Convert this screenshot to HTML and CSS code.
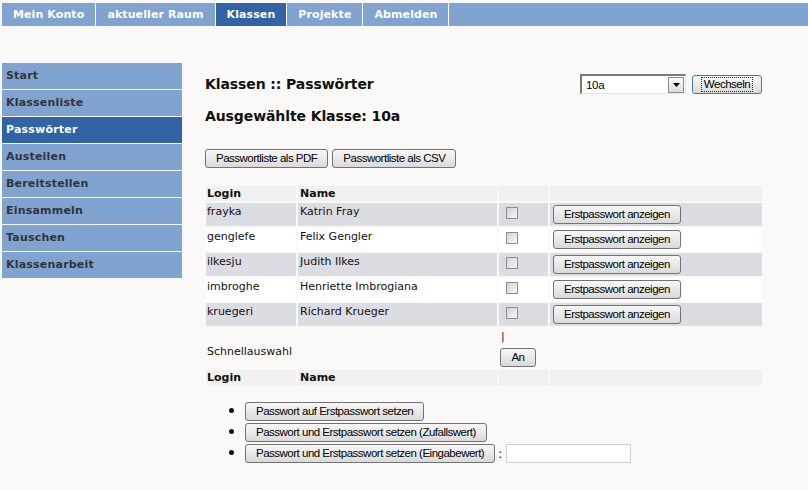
FILE: index.html
```html
<!DOCTYPE html>
<html lang="de">
<head>
<meta charset="utf-8">
<title>Klassen :: Passwörter</title>
<link rel="stylesheet" href="styles.css">
</head>
<body>
<nav class="topnav">
  <a class="tab">Mein Konto</a>
  <a class="tab">aktueller Raum</a>
  <a class="tab tab-active">Klassen</a>
  <a class="tab">Projekte</a>
  <a class="tab">Abmelden</a>
  <span class="tab-fill"></span>
</nav>
<div class="layout">
  <aside class="sidenav">
    <a class="side-item">Start</a>
    <a class="side-item">Klassenliste</a>
    <a class="side-item side-active">Passwörter</a>
    <a class="side-item">Austeilen</a>
    <a class="side-item">Bereitstellen</a>
    <a class="side-item">Einsammeln</a>
    <a class="side-item">Tauschen</a>
    <a class="side-item">Klassenarbeit</a>
  </aside>
  <main class="content">
    <div class="head-row">
      <h1 class="title">Klassen :: Passwörter</h1>
      <div class="class-select">
        <div class="select">
          <span class="select-value">10a</span>
          <span class="select-arrow"><svg width="7" height="4" viewBox="0 0 7 4"><path d="M0 0H7L3.5 4Z" fill="#000"/></svg></span>
        </div>
        <button class="btn btn-focus"><span class="focus-ring">Wechseln</span></button>
      </div>
    </div>
    <h2 class="subtitle">Ausgewählte Klasse: 10a</h2>
    <div class="export">
      <button class="btn">Passwortliste als PDF</button>
      <button class="btn">Passwortliste als CSV</button>
    </div>
    <table class="students">
      <colgroup>
        <col class="col-login"><col class="col-name"><col class="col-check"><col class="col-btn">
      </colgroup>
      <tr class="head">
        <th>Login</th><th class="name">Name</th><th></th><th></th>
      </tr>
      <tr class="odd">
        <td>frayka</td><td class="name">Katrin Fray</td><td><span class="check"></span></td><td><button class="btn btn-row">Erstpasswort anzeigen</button></td>
      </tr>
      <tr class="even">
        <td>genglefe</td><td class="name">Felix Gengler</td><td><span class="check"></span></td><td><button class="btn btn-row">Erstpasswort anzeigen</button></td>
      </tr>
      <tr class="odd">
        <td>ilkesju</td><td class="name">Judith Ilkes</td><td><span class="check"></span></td><td><button class="btn btn-row">Erstpasswort anzeigen</button></td>
      </tr>
      <tr class="even">
        <td>imbroghe</td><td class="name">Henriette Imbrogiana</td><td><span class="check"></span></td><td><button class="btn btn-row">Erstpasswort anzeigen</button></td>
      </tr>
      <tr class="odd">
        <td>kruegeri</td><td class="name">Richard Krueger</td><td><span class="check"></span></td><td><button class="btn btn-row">Erstpasswort anzeigen</button></td>
      </tr>
      <tr class="quick">
        <td colspan="2" class="quick-label">Schnellauswahl</td>
        <td class="quick-cell"><div class="pipe">|</div><button class="btn btn-an">An</button></td>
        <td></td>
      </tr>
      <tr class="head">
        <th>Login</th><th class="name">Name</th><th></th><th></th>
      </tr>
    </table>
    <ul class="actions">
      <li><button class="btn">Passwort auf Erstpasswort setzen</button></li>
      <li><button class="btn">Passwort und Erstpasswort setzen (Zufallswert)</button></li>
      <li><button class="btn">Passwort und Erstpasswort setzen (Eingabewert)</button><span class="colon">:</span><span class="text-input"></span></li>
    </ul>
  </main>
</div>
</body>
</html>
```
FILE: styles.css
```css
html, body {
  margin: 0;
  padding: 0;
}
body {
  background: #faf9f7;
  font-family: "DejaVu Sans", Verdana, sans-serif;
  font-size: 11px;
  color: #111;
}

/* top navigation */
.topnav {
  display: flex;
  margin: 3px 0 0 2px;
  height: 23px;
}
.tab {
  display: block;
  padding: 0 11px;
  line-height: 23px;
  background: #80a3d0;
  color: #fff;
  font-weight: bold;
  letter-spacing: 0.1px;
  border-right: 1px solid #fff;
  white-space: nowrap;
}
.tab-active {
  background: #3263a4;
}
.tab-fill {
  flex: 1;
  background: #80a3d0;
}

.layout {
  display: flex;
  margin-top: 37px;
}

/* side navigation */
.sidenav {
  display: flex;
  flex-direction: column;
  gap: 1px;
  width: 180px;
  margin-left: 2px;
}
.side-item {
  display: block;
  height: 26px;
  line-height: 26px;
  padding-left: 4px;
  background: #80a3d0;
  color: #333338;
  font-weight: bold;
  letter-spacing: 0.2px;
}
.side-active {
  background: #3263a4;
  color: #fff;
}

/* content */
.content {
  display: flex;
  flex-direction: column;
  width: 560px;
  margin-left: 22px;
  padding-top: 11px;
}
.head-row {
  display: flex;
  justify-content: space-between;
  align-items: center;
  height: 20px;
  padding-left: 1px;
  padding-right: 2px;
}
.title, .subtitle {
  margin: 0;
  font-size: 14px;
  font-weight: bold;
  line-height: 16px;
  color: #111;
  letter-spacing: -0.1px;
}
.subtitle {
  margin-top: 14px;
  padding-left: 1px;
}
.class-select {
  display: flex;
  align-items: center;
  gap: 6px;
}
.select {
  box-sizing: border-box;
  width: 106px;
  height: 20px;
  display: flex;
  align-items: center;
  justify-content: space-between;
  background: #fff;
  border-top: 2px solid #7b7b7b;
  border-left: 2px solid #7b7b7b;
  border-right: 1px solid #e4e4e4;
  border-bottom: 1px solid #e4e4e4;
}
.select-value {
  padding-left: 4px;
  font-family: "Liberation Sans", Arial, sans-serif;
  font-size: 11.5px;
  letter-spacing: -0.3px;
  color: #000;
}
.select-arrow {
  box-sizing: border-box;
  width: 16px;
  height: 16px;
  margin-right: 1px;
  border: 1px solid #8c8c8c;
  background: linear-gradient(#ffffff, #dcdcdc);
  display: flex;
  align-items: center;
  justify-content: center;
}

/* buttons */
.btn {
  box-sizing: border-box;
  height: 19px;
  margin: 0;
  padding: 0 10px;
  border: 1px solid #737373;
  border-radius: 3px;
  background: linear-gradient(#f7f7f7, #e9e9e9 50%, #d9d9d9);
  font-family: "Liberation Sans", Arial, sans-serif;
  font-size: 11.5px;
  letter-spacing: -0.5px;
  line-height: 17px;
  color: #000;
  white-space: nowrap;
  vertical-align: middle;
}
.btn-focus {
  width: 70px;
  padding: 0 2px;
  border-color: #3c7db2;
  display: flex;
  align-items: center;
  justify-content: center;
}
.focus-ring {
  display: block;
  border: 1px dotted #333;
  line-height: 13px;
  padding: 0 2px;
}

.export {
  display: flex;
  gap: 4px;
  margin-top: 25px;
  padding-left: 1px;
}

/* table */
.students {
  margin-top: 16px;
  border-collapse: separate;
  border-spacing: 2px;
  width: 560px;
  table-layout: fixed;
}
.col-login { width: 90px; }
.col-name { width: 199px; }
.col-check { width: 49px; }
.col-btn { width: 212px; }
.students th {
  height: 15px;
  padding: 0 1px;
  line-height: 15px;
  text-align: left;
  font-weight: bold;
  background: #f0f0f0;
  vertical-align: middle;
  color: #111;
}
.students td {
  padding: 2px 1px;
  line-height: 13px;
  vertical-align: top;
  color: #111;
}
.students .name {
  padding-left: 2px;
}
.odd td {
  background: #dcdce3;
}
.even td {
  background: #fff;
}
.check {
  display: block;
  box-sizing: border-box;
  width: 12px;
  height: 12px;
  margin: 2px 0 0 6px;
  border: 1px solid #8d8d8d;
  background: linear-gradient(135deg, #d4d4d4, #f6f6f6);
}
.btn-row {
  margin-left: 2px;
  height: 19px;
}
.quick td {
  background: transparent;
}
.students .quick-label {
  vertical-align: middle;
  padding-top: 8px;
}
.students .quick-cell {
  padding: 2px 0 1px 1px;
}
.pipe {
  line-height: 13px;
  padding-left: 1px;
  color: #1a1a40;
}
.btn-an {
  margin-top: 5px;
  width: 36px;
  padding: 0;
}

/* actions list */
.actions {
  margin: 14px 0 0;
  padding-left: 41px;
  list-style: disc;
}
.actions li {
  height: 21px;
  font-size: 12px;
}
.actions li::marker {
  font-size: 15px;
}
.colon {
  margin: 0 4px 0 3px;
  vertical-align: middle;
}
.text-input {
  display: inline-block;
  box-sizing: border-box;
  width: 125px;
  height: 19px;
  background: #fff;
  border: 1px solid #cfcfcf;
  vertical-align: middle;
}
```
